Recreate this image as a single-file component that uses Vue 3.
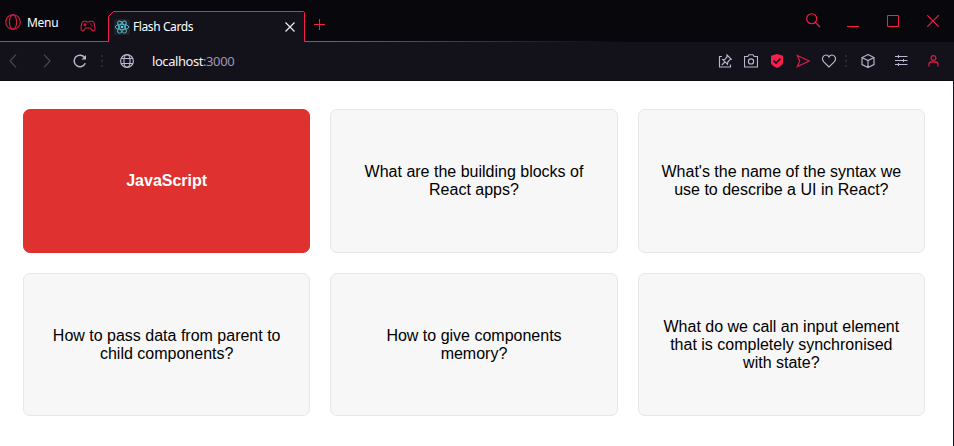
<script setup>
const cards = [
  { text: 'JavaScript', selected: true },
  { text: 'What are the building blocks of React apps?' },
  { text: "What's the name of the syntax we use to describe a UI in React?" },
  { text: 'How to pass data from parent to child components?' },
  { text: 'How to give components memory?' },
  { text: 'What do we call an input element that is completely synchronised with state?' },
]
</script>

<template>
  <div class="window">
    <header class="tabstrip">
      <div class="menu">
        <svg width="16" height="16" viewBox="0 0 16 16" class="line dim">
          <circle cx="8" cy="8" r="7.3" /><ellipse cx="8" cy="8" rx="3.6" ry="7.2" />
        </svg>
        <span class="menu-label">Menu</span>
        <svg class="line dim pad" width="16" height="12" viewBox="0 0 16 12">
          <path d="M4 1.200h2l.8.8h2.400l.8-.8h2c1.500 0 2 1 2.300 2.400l.6 4.200c.4 3-1.600 3.700-3 2.200L10.500 8h-5L4.100 10c-1.400 1.500-3.400.8-3-2.200l.6-4.200C2 2.200 2.500 1.200 4 1.200z" />
          <path d="M5 3.200v3.200M3.400 4.800h3.200M10 4h1.400M11 6h1.400" />
        </svg>
      </div>
      <div class="tab">
        <svg class="tab-shape" width="197" height="31" viewBox="0 0 197 31">
          <path d="M.5 31V5.500l5-5H195.500l1 1V31z" fill="#13111a" stroke="none" />
          <path d="M0 30.500h.5V5.500l5-5H195.500l1 1V30.500h.5" fill="none" stroke="#fa1e4e" />
        </svg>
        <div class="tab-body">
          <svg class="react" width="16" height="16" viewBox="0 0 16 16">
            <rect width="16" height="16" rx="1.500" fill="#202124" stroke="none" />
            <ellipse cx="8" cy="8" rx="6.800" ry="2.700" />
            <ellipse cx="8" cy="8" rx="6.800" ry="2.700" transform="rotate(60 8 8)" />
            <ellipse cx="8" cy="8" rx="6.800" ry="2.700" transform="rotate(120 8 8)" />
            <circle cx="8" cy="8" r="1.300" fill="#61dafb" stroke="none" />
          </svg>
          <span class="tab-title">Flash Cards</span>
          <svg class="tab-close" width="10" height="10" viewBox="0 0 10 10"><path d="M.5.5l9 9M9.500.5l-9 9" /></svg>
        </div>
      </div>
      <div class="strip-rest">
        <svg class="line plus" width="11" height="11" viewBox="0 0 11 11"><path d="M5.500 0v11M0 5.500h11" /></svg>
        <svg class="line search" width="15" height="15" viewBox="0 0 15 15"><circle cx="5.700" cy="5.700" r="5" /><path d="M9.300 9.300l4.700 4.700" /></svg>
        <svg class="line min" width="12" height="12" viewBox="0 0 12 12"><path d="M0 11.500h12" /></svg>
        <svg class="line max" width="12" height="12" viewBox="0 0 12 12"><path d="M.5.5h11v11H.5z" /></svg>
        <svg class="line close" width="12" height="12" viewBox="0 0 12 12"><path d="M.3.3l11.400 11.400M11.700.3L.3 11.700" /></svg>
      </div>
    </header>
    <nav class="toolbar">
      <svg class="arrow back" width="8" height="14" viewBox="0 0 8 14"><path d="M7 .7L1 7l6 6.300" /></svg>
      <svg class="arrow fwd" width="8" height="14" viewBox="0 0 8 14"><path d="M1 .7L7 7l-6 6.300" /></svg>
      <svg class="reload" width="14" height="14" viewBox="0 0 14 14"><path d="M12.300 9.300A5.800 5.800 0 1 1 11.800 3.700" /><path d="M13 1v4.500H8.500z" fill="#bdb4d0" stroke="none" /></svg>
      <svg class="dots" width="2" height="12" viewBox="0 0 2 12"><path d="M1 0v12" /></svg>
      <svg class="globe" width="14" height="14" viewBox="0 0 14 14"><circle cx="7" cy="7" r="6.400" /><ellipse cx="7" cy="7" rx="3.100" ry="6.400" /><path d="M1 4.500h12M1 9.500h12" /></svg>
      <span class="url">localhost<span class="port">:3000</span></span>
      <div class="actions">
        <svg width="14" height="14" viewBox="0 0 14 14"><path d="M4 2.500H1.500v10.500h11V10.500M9 1l4.300 4.300-1.500.4-2 2.300-.3 2.300-4.800-4.800 2.300-.3 2-2.200zM7 7.800L3.800 11" /></svg>
        <svg width="14" height="14" viewBox="0 0 14 14"><path d="M.5 2.500h3.300L5 .7h4l1.200 1.800h3.300v10.500H.5z" /><circle cx="7" cy="7.400" r="2.600" /></svg>
        <svg width="14" height="14" viewBox="0 0 14 14"><path d="M7 0l6 1.800v6.700c0 2.500-3.500 4.500-6 5.500C4.500 13 1 11 1 8.500V1.800z" fill="#fa1e4e" stroke="none" /><path d="M3.600 6.700l2.500 2.400 4.400-4.400" stroke="#13111a" stroke-width="1.700" /></svg>
        <svg class="send" width="14" height="14" viewBox="0 0 14 14"><path d="M1.300 1.600L13.300 7 1.300 12.600 3.700 7z" /></svg>
        <svg width="14" height="14" viewBox="0 0 14 14"><path d="M7 13L1.800 7.800C-1 4.700 1.200 1 4 1c1.600 0 2.500.9 3 2 .5-1.100 1.400-2 3-2 2.800 0 5 3.700 2.200 6.800z" /></svg>
        <svg class="dots dots-right" width="2" height="12" viewBox="0 0 2 12"><path d="M1 0v12" /></svg>
        <svg class="cube" width="14" height="14" viewBox="0 0 14 14"><path d="M7 .6l6 3v7L7 13.500 1 10.600v-7zM1 3.600l6 3 6-3M7 6.600v7" /></svg>
        <svg class="sliders" width="13" height="12" viewBox="0 0 13 12"><path d="M0 1.500h12.500M0 5.500h12.500M0 9.500h12.500M3.500 0v3M8.500 4v3M3.500 8v3" /></svg>
        <svg class="user" width="11" height="12" viewBox="0 0 11 12"><circle cx="5.500" cy="3" r="2.400" /><path d="M1 11.500V9.500C1 8 1.800 7 3.200 7h4.600C9.200 7 10 8 10 9.500v2" /></svg>
      </div>
    </nav>
    <main class="page">
      <div class="cards">
        <div v-for="card in cards" :key="card.text" class="card" :class="{ selected: card.selected }">
          <p>{{ card.text }}</p>
        </div>
      </div>
    </main>
  </div>
</template>

<style>
body { margin: 0; overflow: hidden; }
</style>

<style scoped>
* { box-sizing: border-box; }
.window { width: 954px; height: 446px; display: flex; flex-direction: column; background: #fff; font-family: "Noto Sans", "Open Sans", sans-serif; }
svg { display: block; flex: none; fill: none; stroke: #bdb4d0; stroke-width: 1.15; }
.tabstrip { height: 42px; flex: none; display: flex; background: #08070b; }
.line { stroke: #fa1e4e; }
.plus, .min, .max, .tab-shape, .sliders { stroke-width: 1; }
.dim { stroke: #d01d45; }
.menu { width: 108px; display: flex; align-items: flex-start; padding: 14px 0 0 5px; border-bottom: 1px solid #fa1e4e; }
.menu-label { margin: 0 0 0 6px; width: 53px; font-size: 12px; line-height: 18px; letter-spacing: -.3px; color: #fff; }
.pad { margin-top: 6px; }
.tab { width: 197px; padding-top: 11px; display: grid; }
.tab-shape, .tab-body { grid-area: 1 / 1; }
.tab-body { display: flex; align-items: center; height: 31px; padding: 0 10px 0 6px; z-index: 1; }
.react { stroke: #54bdd6; stroke-width: .9; }
.tab-title { margin-left: 3px; flex: 1; font-size: 12px; line-height: 18px; letter-spacing: -.4px; color: #fff; }
.tab-close { stroke: #eee; stroke-width: 1.2; }
.strip-rest { flex: 1; display: flex; align-items: flex-start; padding: 15px 15px 0 9px; background: linear-gradient(90deg, #fa1e4e 0, #fa1e4e 30px, transparent 320px) left bottom / 100% 1px no-repeat; }
.plus { margin-top: 4px; }
.search { margin: -2px 26px 0 auto; }
.min { margin-right: 28px; }
.max { margin-right: 28px; }
.toolbar { height: 39px; flex: none; display: flex; align-items: center; background: #13111a; border-bottom: 1px solid #0c0a12; padding: 0 15px 0 9px; }
.arrow { stroke: #4c4953; }
.fwd { margin-left: 26px; }
.reload { margin-left: 22px; stroke-width: 1.5; }
.dots { margin-left: 14px; stroke: #2c2838; stroke-width: 2; stroke-dasharray: 2 3; }
.globe { margin-left: 17px; }
.url { margin-left: 18px; font-size: 13px; line-height: 18px; letter-spacing: -.43px; color: #f4f2f8; }
.port { color: #a096b5; }
.actions { margin-left: auto; display: flex; align-items: center; gap: 12px; }
.send { stroke: #e01e49; }
.dots-right { margin-left: -3px; }
.cube { margin-left: 2px; }
.sliders { margin-left: 8px; }
.user { margin-left: 8px; stroke: #d01d45; stroke-width: 1.3; }
.page { flex: 1; padding: 28.3px 28px 0 23px; border-right: 1px solid #13111a; }
.cards { height: 307px; display: grid; grid-template-columns: repeat(3, 1fr); grid-template-rows: repeat(2, 1fr); gap: 20px; }
.card { display: flex; align-items: center; justify-content: center; padding: 0 20px; background: #f7f7f7; border: 1px solid #e7e7e7; border-radius: 7px; font: 16px/18px "Liberation Sans", Arial, sans-serif; color: #000; text-align: center; }
.card p { margin: 0; }
.selected { background: #e03131; border-color: #e03131; color: #fff; font-weight: 700; }
</style>
